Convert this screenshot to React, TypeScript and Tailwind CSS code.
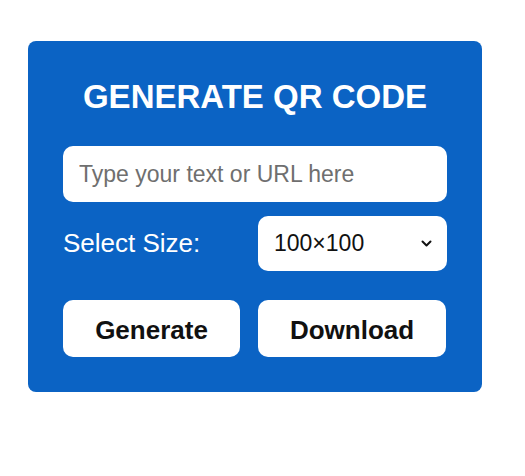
import { useState } from "react";

export default function App() {
    const [text, setText] = useState("");
    const [size, setSize] = useState("100x100");

    return (
        <div className="min-h-[476px] w-[525px] bg-white font-['Liberation_Sans',Arial,sans-serif] pt-[41px] pl-[28px]">
            <div className="w-[454px] h-[351px] bg-[#0b63c4] rounded-[8px] px-[35px] pt-[37px] flex flex-col">
                <h1 className="text-white font-bold text-[33px] leading-[38px] text-center">
                    GENERATE QR CODE
                </h1>

                <input
                    value={text}
                    onChange={(e) => setText(e.target.value)}
                    placeholder="Type your text or URL here"
                    className="mt-[30px] h-[56px] w-full rounded-[10px] bg-white px-[16px] text-[23px] text-gray-900 placeholder:text-[#6f6f6f] outline-none"
                />

                <div className="mt-[14px] flex items-center justify-between">
                    <label className="text-white text-[26px]">Select Size:</label>
                    <div className="relative">
                        <select
                            value={size}
                            onChange={(e) => setSize(e.target.value)}
                            className="appearance-none h-[55px] w-[189px] rounded-[10px] bg-white pl-[16px] text-[23px] text-[#111] outline-none">
                            <option value="100x100">100×100</option>
                            <option value="200x200">200×200</option>
                            <option value="300x300">300×300</option>
                        </select>
                        <svg
                            className="absolute right-[15px] top-[24px] pointer-events-none"
                            width="11"
                            height="7"
                            viewBox="0 0 11 7"
                            fill="none">
                            <path d="M1.5 1.5L5.5 5.5L9.5 1.5" stroke="#111" strokeWidth="2" strokeLinecap="round" strokeLinejoin="round" />
                        </svg>
                    </div>
                </div>

                <div className="mt-[29px] flex gap-[18px]">
                    <button className="h-[57px] w-[177px] rounded-[10px] bg-white pt-[3px] text-[26px] font-bold text-[#111]">
                        Generate
                    </button>
                    <button className="h-[57px] w-[188px] rounded-[10px] bg-white pt-[3px] text-[26px] font-bold text-[#111]">
                        Download
                    </button>
                </div>
            </div>
        </div>
    );
}
